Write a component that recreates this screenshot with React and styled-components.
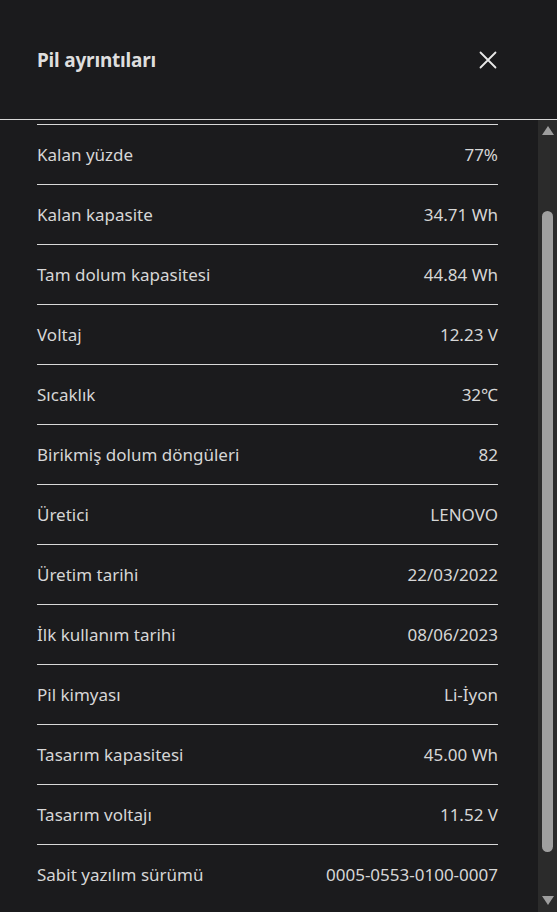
import React from "react";
import styled, { createGlobalStyle } from "styled-components";

const GlobalStyle = createGlobalStyle`
  html, body {
    margin: 0;
    padding: 0;
    background: #1b1b1d;
  }
  body {
    font-family: "Noto Sans", "Open Sans", sans-serif;
    color: #d6d6d6;
  }
`;

const Panel = styled.div`
  width: 557px;
  height: 912px;
  display: flex;
  flex-direction: column;
  background: #1b1b1d;
  overflow: hidden;
`;

const Header = styled.header`
  height: 119px;
  flex-shrink: 0;
  display: flex;
  align-items: center;
  justify-content: space-between;
  padding: 0 59px 0 37px;
  border-bottom: 1px solid #d8d8d8;
`;

const Title = styled.h1`
  margin: 0;
  font-size: 19px;
  font-weight: 700;
  color: #dedede;
  letter-spacing: -0.2px;
`;

const CloseButton = styled.button`
  background: none;
  border: none;
  padding: 0;
  width: 20px;
  height: 20px;
  display: flex;
  align-items: center;
  justify-content: center;
  color: #e8e8e8;
  cursor: pointer;
`;

const Body = styled.div`
  flex: 1;
  display: flex;
  min-height: 0;
`;

const List = styled.div`
  flex: 1;
  padding: 4px 40px 0 37px;
`;

const Row = styled.div`
  height: 59px;
  display: flex;
  align-items: center;
  justify-content: space-between;
  border-top: 1px solid #d8d8d8;
  font-size: 17px;
  color: #d6d6d6;
`;

const Label = styled.span``;

const Value = styled.span`
  text-align: right;
`;

const Scrollbar = styled.div`
  width: 19px;
  flex-shrink: 0;
  background: #2b2b2b;
  display: flex;
  flex-direction: column;
  align-items: center;
  padding: 6px 0 7px;
`;

const Arrow = styled.div`
  width: 0;
  height: 0;
  border-left: 6px solid transparent;
  border-right: 6px solid transparent;
  ${({ $dir }) =>
    $dir === "up"
      ? "border-bottom: 9px solid #9e9e9e;"
      : "border-top: 9px solid #9e9e9e;"}
`;

const Track = styled.div`
  flex: 1;
  width: 100%;
  display: flex;
  flex-direction: column;
  align-items: center;
  padding: 76px 0 44px;
`;

const Thumb = styled.div`
  width: 11px;
  flex: 1;
  border-radius: 6px;
  background: #a0a0a0;
`;

const rows = [
  ["Kalan yüzde", "77%"],
  ["Kalan kapasite", "34.71 Wh"],
  ["Tam dolum kapasitesi", "44.84 Wh"],
  ["Voltaj", "12.23 V"],
  ["Sıcaklık", "32℃"],
  ["Birikmiş dolum döngüleri", "82"],
  ["Üretici", "LENOVO"],
  ["Üretim tarihi", "22/03/2022"],
  ["İlk kullanım tarihi", "08/06/2023"],
  ["Pil kimyası", "Li-İyon"],
  ["Tasarım kapasitesi", "45.00 Wh"],
  ["Tasarım voltajı", "11.52 V"],
  ["Sabit yazılım sürümü", "0005-0553-0100-0007"],
];

export default function App() {
  return (
    <>
      <GlobalStyle />
      <Panel>
        <Header>
          <Title>Pil ayrıntıları</Title>
          <CloseButton aria-label="Kapat">
            <svg width="18" height="18" viewBox="0 0 18 18">
              <path
                d="M1.5 1.5 L16.5 16.5 M16.5 1.5 L1.5 16.5"
                stroke="currentColor"
                strokeWidth="1.8"
                strokeLinecap="round"
              />
            </svg>
          </CloseButton>
        </Header>
        <Body>
          <List>
            {rows.map(([label, value]) => (
              <Row key={label}>
                <Label>{label}</Label>
                <Value>{value}</Value>
              </Row>
            ))}
          </List>
          <Scrollbar>
            <Arrow $dir="up" />
            <Track>
              <Thumb />
            </Track>
            <Arrow $dir="down" />
          </Scrollbar>
        </Body>
      </Panel>
    </>
  );
}
